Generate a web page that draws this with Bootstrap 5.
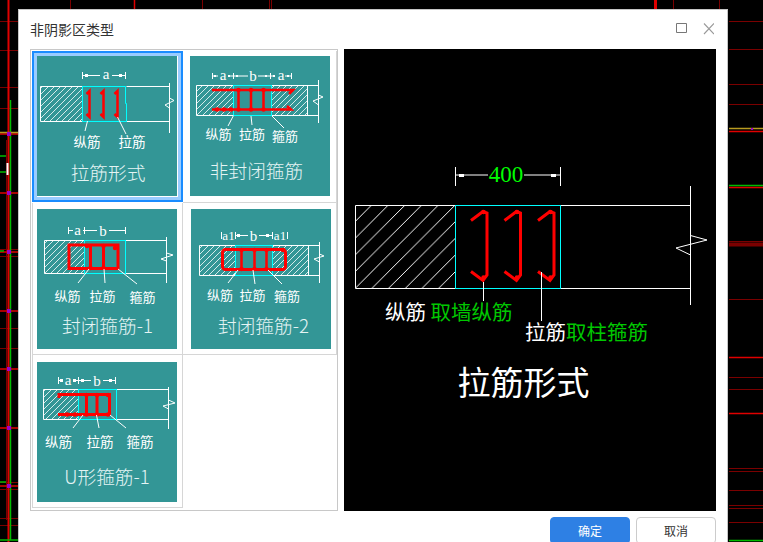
<!DOCTYPE html>
<html lang="zh">
<head>
<meta charset="utf-8">
<title>非阴影区类型</title>
<link href="https://cdn.jsdelivr.net/npm/bootstrap@5.3.0/dist/css/bootstrap.min.css" rel="stylesheet">
<style>
html,body{height:100%;}
body{background:#000;overflow:hidden;font-family:"Noto Sans CJK SC","Liberation Sans",sans-serif;position:relative;}
.cad-bg{position:absolute;left:0;top:0;width:763px;height:542px;}
.dlg{position:relative;width:710px;height:560px;margin:9px 0 0 18px;background:#fff;border:1px solid #c6c6c6;}
.dlg-head{height:39px;padding:0 13px 0 11px;}
.dlg-title{font-size:14px;color:#333;line-height:39px;}
.dlg-body{padding-left:11px;gap:6px;}
.pick-list{width:308px;height:462px;border:1px solid #c8c8c8;padding:1px 0 0 1px;display:grid;grid-template-columns:151px 154px;grid-template-rows:152px 152px 153px;}
.pick-cell{border-right:1px solid #d6d6d6;border-bottom:1px solid #d6d6d6;}
.pick-cell.c-empty{border:0;}
.pick-cell.c-left{border-left:1px solid #d6d6d6;}
.pick-cell.c-sel{border:2px solid #1a8cff;box-shadow:inset 0 0 0 3px #99ccff;margin-bottom:1px;}
.pick-cell svg{display:block;background:#339696;}
.p-a{padding:3px 0 0 3px;}
.p-b{padding:5px 0 0 7px;}
.p-c{padding:6px 0 0 4px;}
.p-d{padding:6px 0 0 8px;}
.p-e{padding:7px 0 0 4px;}
.preview{width:372px;height:462px;background:#000;display:block;}
.dlg-foot{padding:6px 11px 0 0;gap:6px;}
.btn-go,.btn-no{width:80px;height:27px;font-size:12px;line-height:25px;padding:0;border-radius:4px;}
.btn-go{background:#2e80e4;border:1px solid #2e80e4;color:#fff;}
.btn-no{background:#fff;border:1px solid #ccc;color:#333;}
.w{stroke:#fff;fill:none;stroke-width:1;}
.c{stroke:#0ff;fill:none;stroke-width:1;}
.r{stroke:#f00;fill:none;stroke-width:2.500;}
.r3{stroke:#f00;fill:none;stroke-width:3;}
.rp{stroke:#f00;fill:none;stroke-width:3;}
.dot{stroke:#f00;fill:none;stroke-width:4.500;stroke-linecap:round;}
.h{stroke:#fff;stroke-width:.8;}
.hb{stroke:#fff;stroke-width:1;shape-rendering:crispEdges;}
.l{fill:#fff;font-size:13.500px;text-anchor:middle;font-family:"Noto Sans CJK SC",sans-serif;}
.ls{fill:#fff;font-size:13px;text-anchor:middle;font-family:"Noto Sans CJK SC",sans-serif;}
.d{fill:#fff;font-size:15px;text-anchor:middle;font-family:"Liberation Serif",serif;}
.d1{fill:#fff;font-size:13px;text-anchor:middle;font-family:"Liberation Serif",serif;}
.t{fill:#e4f4f4;font-size:18.700px;text-anchor:middle;font-family:"Noto Sans CJK SC",sans-serif;font-weight:300;}
.m{fill:#fff;}
.pv-w{fill:#fff;font-size:20.500px;font-family:"Noto Sans CJK SC",sans-serif;}
.pv-g{fill:#00c800;font-size:20.500px;font-family:"Noto Sans CJK SC",sans-serif;}
.pv-n{fill:#0f0;font-size:23px;text-anchor:middle;font-family:"Liberation Serif",serif;}
.pv-t{fill:#fff;font-size:33px;text-anchor:middle;font-family:"Noto Sans CJK SC",sans-serif;}
</style>
</head>
<body>
<svg class="cad-bg" viewBox="0 0 763 542" aria-hidden="true">
  <g stroke="#7a0000" stroke-width="1">
    <path d="M70.500 0V9M202.500 0V9M269.500 0V9M271.500 0V9M673.500 0V9M719.500 0V9"/>
    <path d="M0 21.500H18M0 50.500H18M0 87.500H18M0 108.500H18M0 249.500H18M0 256.500H18M0 328.500H18M0 348.500H18M0 482.500H18M0 489.500H18M0 518.500H18M0 525.500H18"/>
    <path d="M729 21.500H763M729 49.500H763M729 84.500H763M729 104.500H763M729 241.500H763M729 299.500H763M729 377.500H763M729 389.500H763M729 468.500H763M729 471.500H763M729 490.500H763M729 505.500H763M729 508.500H763M729 522.500H763"/>
    <path d="M729 244.500H763" stroke-width="4"/>
    <path d="M6.500 140V520" />
  </g>
  <g stroke="#e00000" stroke-width="1.500">
    <path d="M134.500 0V9" /><path d="M655.500 0V9" stroke-width="3"/>
    <path d="M8.500 0V542" stroke-width="2"/>
    <path d="M0 134H18M0 193H18M0 252H18M0 311H18M0 369H18M0 428H18M0 486H18"/>
    <path d="M729 131.500H763M729 187.500H763M729 357.500H763M729 413.500H763"/>
  </g>
  <g stroke="#0b0" stroke-width="1.500">
    <path d="M10.500 100V540"/>
    <path d="M0 156H6M0 172H6M0 251H4M0 482H6M0 540H18M729 540.500H763M729 185.500H763"/>
  </g>
  <path d="M0 132.500H18M729 128.500H763" stroke="#b89a20" stroke-width="1.500"/>
  <path d="M7.500 163V175" stroke="#fff" stroke-width="2"/>
  <g fill="#90c"><rect x="7" y="132" width="4" height="4"/><rect x="7" y="191" width="4" height="4"/><rect x="7" y="250" width="4" height="4"/><rect x="7" y="309" width="4" height="4"/><rect x="7" y="367" width="4" height="4"/><rect x="7" y="426" width="4" height="4"/><rect x="7" y="484" width="4" height="4"/><rect x="751" y="128" width="2" height="2"/></g>
</svg>

<div class="dlg">
  <div class="dlg-head d-flex align-items-start justify-content-between">
    <div class="dlg-title">非阴影区类型</div>
    <svg width="38" height="39" viewBox="0 0 38 39" aria-hidden="true"><path d="M0.500 13.500H10.500V22.500H0.500Z" fill="none" stroke="#777"/><path d="M28 13.500L38 24M38 13.500L28 24" stroke="#999" stroke-width="1.100"/></svg>
  </div>
  <div class="dlg-body d-flex">
    <div class="pick-list">
      <div class="pick-cell c-sel p-a">
        <svg width="140" height="140" viewBox="0 0 140 140">
          <defs>
            <pattern id="hs" patternUnits="userSpaceOnUse" width="6" height="6"><path d="M-1 7L7 -1M-1 1L1 -1M5 7L7 5" class="h"/></pattern>
            <pattern id="hl" patternUnits="userSpaceOnUse" width="16.700" height="16.700"><path d="M-1 17.700L17.700 -1" class="hb"/></pattern>
          </defs>
          <path class="w" d="M45.500 16V23M88.500 16V23M45.500 19.500H63M75 19.500H88.500"/><rect class="m" x="48" y="18" width="3" height="3"/><rect class="m" x="82" y="18" width="3" height="3"/>
          <text class="d" x="69" y="23">a</text>
          <rect x="3.500" y="30.500" width="42" height="35" fill="url(#hs)"/>
          <path class="w" d="M45.500 30.500H3.500V65.500H45.500M89.500 30.500H132.500M89.500 65.500H132.500M132.500 27V77"/>
          <path class="w" d="M132.500 42L137 44.500L128 49L132.500 52"/>
          <path class="c" d="M45.500 30.500H88.500V47.500H89.500V65.500H45.500Z"/>
          <path class="r" d="M49.500 38L52.500 35V61L49.500 58M63.500 38L66.500 35V61L63.500 58M77.500 38L80.500 35V61L77.500 58"/>
          <path class="w" d="M50.500 65L48 75M80.500 61L89 78"/>
          <text class="l" x="50" y="91">纵筋</text><text class="l" x="95" y="91">拉筋</text>
          <text class="t" x="71" y="124">拉筋形式</text>
        </svg>
      </div>
      <div class="pick-cell p-b">
        <svg width="140" height="140" viewBox="0 0 140 140">
          <path class="w" d="M22.500 17V23M43.500 17V23M80.500 17V23M101.500 17V23M22.500 20H28M38 20H58M68 20H85M95 20H101.500"/><rect class="m" x="24" y="19" width="2" height="2"/><rect class="m" x="38" y="19" width="2" height="2"/><rect class="m" x="46" y="19" width="2" height="2"/><rect class="m" x="75" y="19" width="2" height="2"/><rect class="m" x="83" y="19" width="2" height="2"/><rect class="m" x="97" y="19" width="2" height="2"/>
          <text class="d" x="33" y="24">a</text><text class="d" x="63" y="25">b</text><text class="d" x="91" y="24">a</text>
          <rect x="6.500" y="29.500" width="37" height="30" fill="url(#hs)"/><rect x="81.500" y="29.500" width="36" height="30" fill="url(#hs)"/>
          <path class="w" d="M43.500 29.500H6.500V59.500H43.500M81.500 29.500H128.500M81.500 59.500H128.500M117.500 29.500V59.500M128.500 24V67M128.500 39L133 41L123 45L128.500 49"/>
          <rect class="c" x="43.500" y="29.500" width="38" height="30"/>
          <path class="r" d="M22 34H103L99 38M22 53.500H101L97 50M48.500 34V53.500M61 34V53.500M73.500 34V53.500"/>
          <path class="dot" d="M27 53.500h0M34 53.500h0M41 53.500h0M48.500 53.500h0M61 53.500h0M73.500 53.500h0M48.500 34h0M61 34h0M73.500 34h0"/>
          <path class="w" d="M43.500 59.500L38 70M61 60L62 69M82 60L94 72"/>
          <text class="ls" x="28.500" y="83">纵筋</text><text class="ls" x="62" y="83">拉筋</text><text class="ls" x="95" y="85">箍筋</text>
          <text class="t" x="66.500" y="122">非封闭箍筋</text>
        </svg>
      </div>
      <div class="pick-cell c-left p-c">
        <svg width="140" height="140" viewBox="0 0 140 140">
          <path class="w" d="M31.500 18V25M47.500 18V25M88.500 18V25M31.500 21.500H36M46 21.500H60M72 21.500H88.500"/>
          <text class="d" x="40.500" y="25.500">a</text><text class="d" x="66" y="27">b</text>
          <rect x="7.500" y="31.500" width="40" height="33" fill="url(#hs)"/>
          <path class="w" d="M47.500 31.500H7.500V64.500H47.500M88.500 31.500H129.500M88.500 64.500H129.500M129.500 28V74M129.500 44L136 46L124 50L129.500 52"/>
          <rect class="c" x="47.500" y="31.500" width="41" height="33"/>
          <path class="r3" d="M32 36H81V59.500H32ZM53.500 36V59.500M66.500 36V59.500"/>
          <path class="dot" d="M50 37h0M66.500 37h0M78 39h0M53.500 59h0M66.500 59h0"/>
          <path class="w" d="M52 60L41 74M67 60L68 74M81 60L100 75"/>
          <text class="ls" x="30.500" y="92">纵筋</text><text class="ls" x="65.500" y="92">拉筋</text><text class="ls" x="105.500" y="93">箍筋</text>
          <text class="t" x="70.500" y="124">封闭箍筋-1</text>
        </svg>
      </div>
      <div class="pick-cell p-d">
        <svg width="140" height="140" viewBox="0 0 140 140">
          <path class="w" d="M30.500 23V30M44.500 23V30M81.500 23V30M96.500 23V30M44.500 26.500H57M68 26.500H82"/><rect class="m" x="46" y="25" width="3" height="3"/><rect class="m" x="75" y="25" width="3" height="3"/>
          <text class="d1" x="37.500" y="31">a1</text><text class="d" x="62.500" y="32">b</text><text class="d1" x="89" y="31">a1</text>
          <rect x="8.500" y="36.500" width="36" height="30" fill="url(#hs)"/><rect x="81.500" y="36.500" width="36" height="30" fill="url(#hs)"/>
          <path class="w" d="M44.500 36.500H8.500V66.500H44.500M81.500 36.500H128.500M81.500 66.500H128.500M117.500 36.500V66.500M128.500 33V74M128.500 45L133 47L123 50L128.500 53"/>
          <rect class="c" x="44.500" y="36.500" width="37" height="30"/>
          <rect class="r3" x="31.500" y="40.500" width="63" height="20" rx="3"/>
          <path class="r" d="M50.500 40.500V60.500M63.500 40.500V60.500M75.500 40.500V60.500"/>
          <path class="dot" d="M50.500 41h0M63.500 41h0M75.500 41h0M92 41h0M50.500 60h0M63.500 60h0M75.500 60h0"/>
          <path class="w" d="M47 61L37 74M62 61L64 75M77 61L91 75"/>
          <text class="ls" x="29" y="91">纵筋</text><text class="ls" x="61.500" y="91">拉筋</text><text class="ls" x="96" y="91.500">箍筋</text>
          <text class="t" x="72.500" y="124">封闭箍筋-2</text>
        </svg>
      </div>
      <div class="pick-cell c-left p-e">
        <svg width="140" height="140" viewBox="0 0 140 140">
          <path class="w" d="M21.500 15V22M41.500 15V22M78.500 15V22M21.500 18.500H26M36 18.500H54M66 18.500H78.500"/><rect class="m" x="23" y="17" width="3" height="3"/><rect class="m" x="36" y="17" width="3" height="3"/><rect class="m" x="44" y="17" width="3" height="3"/><rect class="m" x="72" y="17" width="3" height="3"/>
          <text class="d" x="31" y="23">a</text><text class="d" x="60" y="24">b</text>
          <rect x="6.500" y="27.500" width="35" height="30" fill="url(#hs)"/>
          <path class="w" d="M41.500 27.500H6.500V57.500H41.500M79.500 27.500H131.500M79.500 57.500H131.500M131.500 25V67M131.500 38L138 41L126 44L131.500 47"/>
          <rect class="c" x="41.500" y="27.500" width="38" height="30"/>
          <path class="r3" d="M22 36V32.500H72.500V52.500H21M49.500 32.500V52.500M60 32.500V52.500"/>
          <path class="dot" d="M30 52.500h0M38 52.500h0M49.500 52.500h0M60 52.500h0M71 52.500h0M49.500 33h0M60 33h0M71 33h0"/>
          <path class="w" d="M46 53L36 66M59.500 53L62 66M73 53L89 66"/>
          <text class="l" x="21.500" y="85">纵筋</text><text class="l" x="63" y="85">拉筋</text><text class="l" x="103" y="85">箍筋</text>
          <text class="t" x="70" y="122">U形箍筋-1</text>
        </svg>
      </div>
      <div class="pick-cell c-empty"></div>
    </div>
    <svg class="preview" viewBox="0 0 372 462">
      <path class="w" d="M111.500 118V137M216.500 118V137M111.500 126H144M180 126H216.500"/><rect class="m" x="115" y="125" width="5" height="3"/><rect class="m" x="207" y="125" width="5" height="3"/>
      <text class="pv-n" x="162" y="133">400</text>
      <rect x="11.500" y="156.500" width="100" height="83" fill="url(#hl)"/>
      <path class="w" d="M111.500 156.500H11.500V239.500H111.500M216.500 156.500H346.500M216.500 239.500H346.500M346.500 137V256M346.500 186.500L363 191L332 199L346.500 206"/>
      <rect class="c" x="111.500" y="156.500" width="105" height="83"/>
      <path class="rp" d="M127 171.500L139 162.500L143 164V226L139 231.500L127 222.500M160.500 171.500L172.500 162.500L176.500 164V226L172.500 231.500L160.500 222.500M194 171.500L206 162.500L210 164V226L206 231.500L194 222.500"/>
      <path class="dot" d="M139.500 163h0M139.500 228.500h0M173 163h0M173 228.500h0M206.500 163h0M206.500 228.500h0"/>
      <path class="w" d="M139.500 233V252M197.500 223V272"/>
      <text class="pv-w" x="41" y="271">纵筋</text><text class="pv-g" x="86.500" y="271">取墙纵筋</text>
      <text class="pv-w" x="181" y="291">拉筋</text><text class="pv-g" x="222" y="291">取柱箍筋</text>
      <text class="pv-t" x="179.500" y="346">拉筋形式</text>
    </svg>
  </div>
  <div class="dlg-foot d-flex justify-content-end">
    <button type="button" class="btn btn-go">确定</button>
    <button type="button" class="btn btn-no">取消</button>
  </div>
</div>
</body>
</html>
